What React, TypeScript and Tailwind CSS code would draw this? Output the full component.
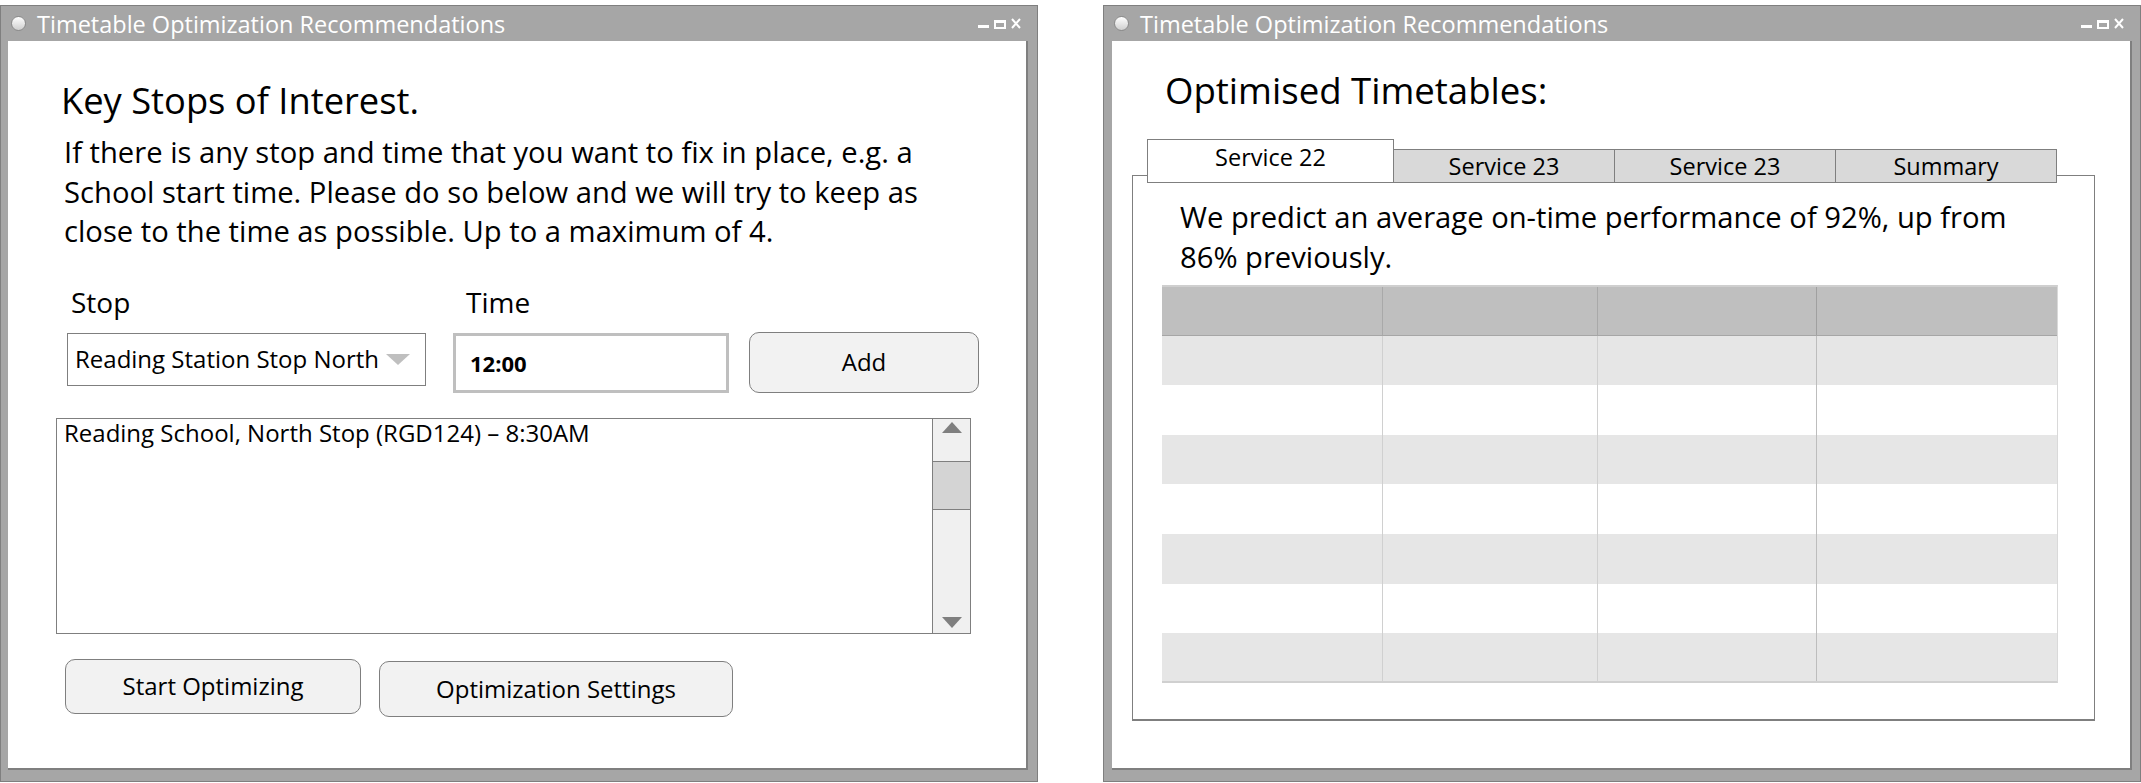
import React from "react";

function TitleBar() {
  return (
    <div className="h-[35px] flex items-center pl-[10px] pr-[15px] shrink-0">
      <div className="w-[15px] h-[15px] rounded-full border border-[#8a8a8a] bg-linear-to-b from-white to-[#cfcfcf]" />
      <span className="ml-[11px] text-white text-[23.5px] leading-[30px]">
        Timetable Optimization Recommendations
      </span>
      <svg className="ml-auto" width="44" height="11" viewBox="0 0 44 11">
        <rect x="0" y="7" width="11" height="3" fill="#fff" />
        <rect x="16" y="2" width="12" height="9" fill="#fff" />
        <rect x="18" y="5" width="8" height="4" fill="#a6a6a6" />
        <path d="M34 1 L42 10 M42 1 L34 10" stroke="#fff" strokeWidth="2" />
      </svg>
    </div>
  );
}

function Window({ children, inner }: { children: React.ReactNode; inner: string }) {
  return (
    <div className="w-[1038px] h-[777px] border border-[#7f7f7f] bg-[#a6a6a6] flex flex-col shrink-0">
      <TitleBar />
      <div className={"flex-1 bg-white border-r-2 border-b-2 border-[#7f7f7f] flex flex-col " + inner}>
        {children}
      </div>
    </div>
  );
}

function TriUp() {
  return (
    <svg width="20" height="11" viewBox="0 0 20 11">
      <path d="M10 0 L20 11 L0 11 Z" fill="#7f7f7f" />
    </svg>
  );
}
function TriDown() {
  return (
    <svg width="20" height="11" viewBox="0 0 20 11">
      <path d="M0 0 L20 0 L10 11 Z" fill="#7f7f7f" />
    </svg>
  );
}

function LeftWindow() {
  return (
    <Window inner="ml-[7px] mr-[9px] mb-[11px]">
      <h1 className="mt-[35px] ml-[53px] text-[36.3px] leading-[49px] font-normal">Key Stops of Interest.</h1>
      <p className="mt-[8px] ml-[56px] text-[29.2px] leading-[39.5px]">
        If there is any stop and time that you want to fix in place, e.g. a
        <br />
        School start time. Please do so below and we will try to keep as
        <br />
        close to the time as possible. Up to a maximum of 4.
      </p>
      <div className="mt-[31px] flex text-[28px] leading-[38px]">
        <span className="ml-[63px] w-[395px]">Stop</span>
        <span>Time</span>
      </div>
      <div className="mt-[11px] ml-[59px] flex items-start">
        <div className="mt-[1px] w-[359px] h-[53px] border border-[#7f7f7f] flex items-center justify-between pl-[7px] pr-[15px]">
          <span className="text-[24px] leading-[30px]">Reading Station Stop North</span>
          <svg width="24" height="11" viewBox="0 0 24 11">
            <path d="M0 0 H24 L12 11 Z" fill="#bfbfbf" />
          </svg>
        </div>
        <div className="ml-[27px] mt-[1px] w-[276px] h-[60px] border-[3px] border-[#bfbfbf] flex items-center pl-[14px]">
          <span className="text-[22px] leading-[30px] font-bold">12:00</span>
        </div>
        <button className="ml-[20px] w-[230px] h-[61px] rounded-[10px] border border-[#7f7f7f] bg-[#f2f2f2] text-[24px] leading-[30px]">
          Add
        </button>
      </div>
      <div className="mt-[25px] ml-[48px] w-[915px] h-[216px] border border-[#7f7f7f] flex">
        <div className="flex-1 pl-[7px] text-[24px] leading-[28px]">
          Reading School, North Stop (RGD124) – 8:30AM
        </div>
        <div className="w-[38px] border-l border-[#7f7f7f] bg-[#f0f0f0] flex flex-col items-center">
          <div className="mt-[3px]">
            <TriUp />
          </div>
          <div className="mt-[28px] w-full h-[49px] border-y border-[#7f7f7f] bg-[#d4d4d4]" />
          <div className="flex-1" />
          <div className="mb-[5px]">
            <TriDown />
          </div>
        </div>
      </div>
      <div className="mt-[25px] ml-[57px] flex items-start">
        <button className="w-[296px] h-[55px] rounded-[10px] border border-[#7f7f7f] bg-[#f2f2f2] text-[24px] leading-[30px]">
          Start Optimizing
        </button>
        <button className="ml-[18px] mt-[2px] w-[354px] h-[56px] rounded-[10px] border border-[#7f7f7f] bg-[#f2f2f2] text-[24px] leading-[30px]">
          Optimization Settings
        </button>
      </div>
    </Window>
  );
}

const rowColors = ["bg-[#e6e6e6]", "bg-white", "bg-[#e6e6e6]", "bg-white", "bg-[#e6e6e6]", "bg-white", "bg-[#e6e6e6]"];
const rowHeights = ["h-[49px]", "h-[50px]", "h-[49px]", "h-[50px]", "h-[50px]", "h-[49px]", "h-[48px]"];

function Table() {
  return (
    <div className="mt-[8px] ml-[29px] w-[896px] border-t-2 border-t-[#cfcfcf] border-b-2 border-b-[#d0d0d0] border-r border-r-[#d9d9d9]">
      <div className="grid grid-cols-[221px_215px_219px_240px] h-[49px] bg-[#bfbfbf] border-b border-[#a6a6a6]">
        <div className="border-r border-[#a9a9a9]" />
        <div className="border-r border-[#a9a9a9]" />
        <div className="border-r border-[#a0a0a0]" />
        <div />
      </div>
      {rowColors.map((c, i) => (
        <div key={i} className={"grid grid-cols-[221px_215px_219px_240px] " + c + " " + rowHeights[i]}>
          <div className="border-r border-[#d0d0d0]" />
          <div className="border-r border-[#d0d0d0]" />
          <div className="border-r border-[#bdbdbd]" />
          <div />
        </div>
      ))}
    </div>
  );
}

function RightWindow() {
  const tab = "w-[222px] h-[34px] -ml-px border border-[#7f7f7f] bg-[#d9d9d9] flex items-center justify-center text-[23.5px] leading-[30px]";
  return (
    <Window inner="ml-[8px] mr-[8px] mb-[11px]">
      <h1 className="mt-[25px] ml-[53px] text-[36.6px] leading-[49px] font-normal">Optimised Timetables:</h1>
      <div className="mt-[24px] ml-[20px] w-[963px] flex flex-col">
        <div className="relative z-10 flex items-end pl-[15px] -mb-[8px]">
          <div className="w-[247px] h-[44px] border border-[#7f7f7f] bg-white flex items-center justify-center pb-[8px] text-[23.5px] leading-[30px]">
            Service 22
          </div>
          <div className={tab}>Service 23</div>
          <div className={tab}>Service 23</div>
          <div className={tab}>Summary</div>
        </div>
        <div className="h-[546px] border border-[#7f7f7f] border-b-2 bg-white flex flex-col">
          <p className="mt-[22px] ml-[47px] text-[29.2px] leading-[39.5px]">
            We predict an average on-time performance of 92%, up from
            <br />
            86% previously.
          </p>
          <Table />
        </div>
      </div>
    </Window>
  );
}

export default function App() {
  return (
    <div className="w-[2141px] h-[783px] bg-white flex items-start gap-[65px] pt-[5px] text-black font-['Open_Sans',sans-serif] overflow-hidden">
      <LeftWindow />
      <RightWindow />
    </div>
  );
}
